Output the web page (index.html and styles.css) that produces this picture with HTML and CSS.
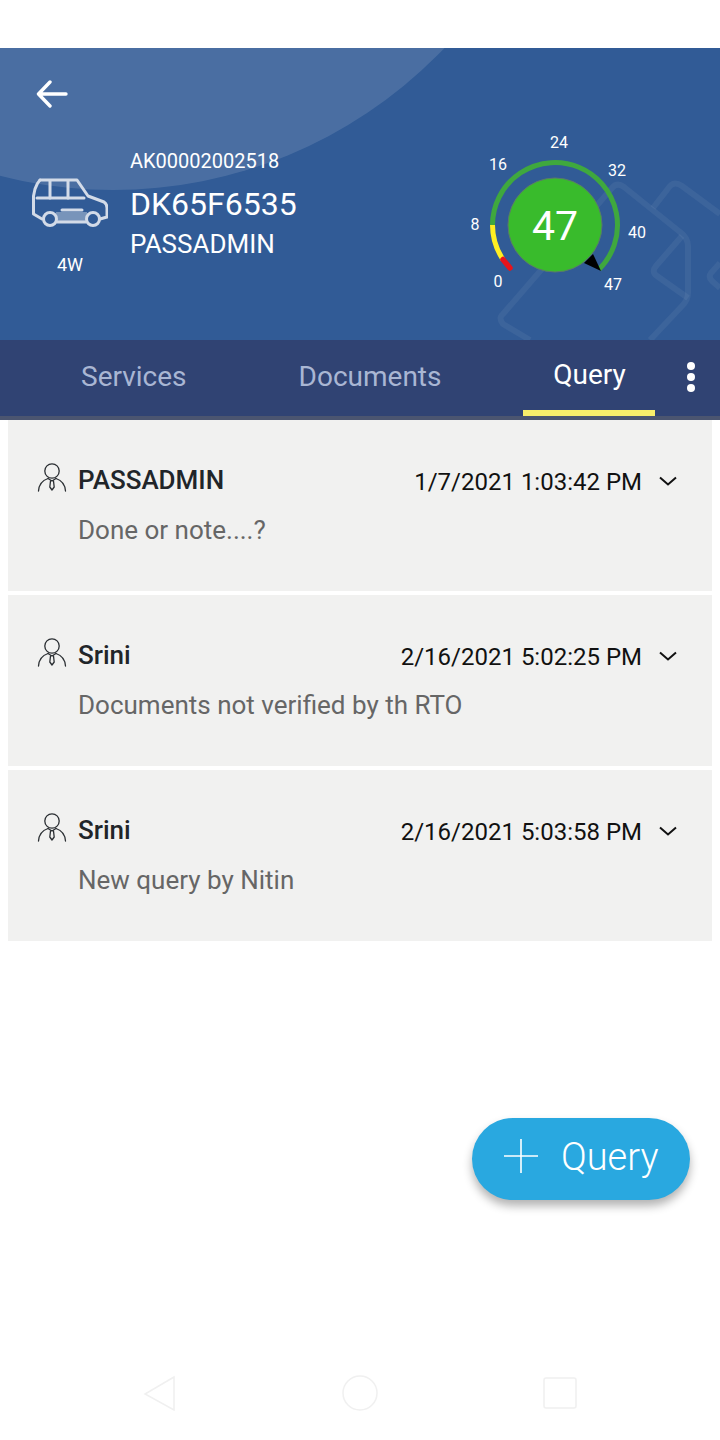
FILE: index.html
```html
<!DOCTYPE html>
<html lang="en">
<head>
    <meta charset="UTF-8">
    <meta name="viewport" content="width=device-width, initial-scale=1.0">
    <title>Query</title>
    <link rel="stylesheet" href="styles.css">
</head>
<body>
    <div class="page">
        <div class="status-bar"></div>

        <header class="header">
            <svg class="header-bg" viewBox="0 0 720 292" aria-hidden="true">
                <circle cx="113" cy="-316" r="458" fill="#fff" fill-opacity="0.12"/>
                <g fill="none" stroke="#fff" stroke-opacity="0.055" stroke-width="6" stroke-linejoin="round">
                    <path d="M530 292 L503 276 Q498 270 503 266 L612 140 Q617 134 624 139 L680 184 Q688 190 688 198 L688 245 Q688 252 682 258 L650 292"/>
                    <path d="M653 160 L670 138 Q675 133 682 138 L720 166"/>
                    <path d="M682 188 L656 218 Q651 224 657 228 L688 250"/>
                    <path d="M720 215 L711 225 Q708 229 712 233 L720 240"/>
                </g>
            </svg>

            <div class="header-left">
                <svg class="back-icon" viewBox="0 0 32 28" aria-hidden="true">
                    <path d="M30 14 H3 M14 2 L2.500 14 L14 26" fill="none" stroke="#fff" stroke-width="3.400" stroke-linecap="round" stroke-linejoin="round"/>
                </svg>
                <div class="vehicle">
                    <div class="vehicle-type">
                        <svg class="car-icon" viewBox="0 0 76 54" aria-hidden="true">
                            <path d="M24 34 H55 V45 H24 Z" fill="#fff" fill-opacity="0.35"/>
                            <g fill="none" stroke="#d3dbe8" stroke-width="3" stroke-linecap="round" stroke-linejoin="round">
                                <path d="M8 2 H45 L56 18 L72 24 Q75 26 75 30 V39 L68 41"/>
                                <path d="M8 2 Q5 5 3 11 L1.500 18 V36 L10 41"/>
                                <path d="M5 20 H52"/>
                                <path d="M18 3 V20 M36 3 V20"/>
                                <path d="M30 32 H50"/>
                                <path d="M25 44 H54"/>
                                <circle cx="18" cy="41" r="6.500"/>
                                <circle cx="61" cy="41" r="6.500"/>
                            </g>
                        </svg>
                        <span class="type-label">4W</span>
                    </div>
                    <div class="vehicle-text">
                        <div class="vehicle-code">AK00002002518</div>
                        <div class="vehicle-number">DK65F6535</div>
                        <div class="vehicle-owner">PASSADMIN</div>
                    </div>
                </div>
            </div>

            <svg class="gauge" viewBox="460 125 190 175" role="img" aria-label="47">
                <g fill="none" stroke-width="5">
                    <path d="M492.500 225 A62.500 62.500 0 1 1 599.200 269.200" stroke="#3fa83e"/>
                    <path d="M492.500 225 A62.500 62.500 0 0 0 503 259.500" stroke="#ffee22"/>
                    <path d="M503 259.500 L510 268" stroke="#e8141c" stroke-width="5.500" stroke-linecap="round"/>
                </g>
                <circle cx="555" cy="225" r="47" fill="#39bb2c" stroke="#5a7a6a" stroke-width="1"/>
                <path d="M601 271 L584 263 L593 254 Z" fill="#000"/>
                <text class="gauge-value" x="555" y="240">47</text>
                <g class="gauge-tick">
                    <text x="559" y="148">24</text>
                    <text x="498" y="170">16</text>
                    <text x="617" y="176">32</text>
                    <text x="475" y="230">8</text>
                    <text x="637" y="238">40</text>
                    <text x="498" y="287">0</text>
                    <text x="613" y="290">47</text>
                </g>
            </svg>
        </header>

        <nav class="tabs">
            <a class="tab">Services</a>
            <a class="tab">Documents</a>
            <a class="tab tab-active">Query</a>
            <div class="more"><span></span><span></span><span></span></div>
        </nav>

        <main class="queries">
            <div class="query-card">
                <div class="query-head">
                    <svg class="user-icon" viewBox="0 0 30 30" aria-hidden="true">
                        <use href="#user"/>
                    </svg>
                    <span class="query-name">PASSADMIN</span>
                    <span class="query-date">1/7/2021 1:03:42 PM</span>
                    <svg class="chevron" viewBox="0 0 18 10" aria-hidden="true"><path d="M1 1.500 L9 8.500 L17 1.500"/></svg>
                </div>
                <p class="query-text">Done or note....?</p>
            </div>
            <div class="query-card">
                <div class="query-head">
                    <svg class="user-icon" viewBox="0 0 30 30" aria-hidden="true">
                        <use href="#user"/>
                    </svg>
                    <span class="query-name">Srini</span>
                    <span class="query-date">2/16/2021 5:02:25 PM</span>
                    <svg class="chevron" viewBox="0 0 18 10" aria-hidden="true"><path d="M1 1.500 L9 8.500 L17 1.500"/></svg>
                </div>
                <p class="query-text">Documents not verified by th RTO</p>
            </div>
            <div class="query-card">
                <div class="query-head">
                    <svg class="user-icon" viewBox="0 0 30 30" aria-hidden="true">
                        <use href="#user"/>
                    </svg>
                    <span class="query-name">Srini</span>
                    <span class="query-date">2/16/2021 5:03:58 PM</span>
                    <svg class="chevron" viewBox="0 0 18 10" aria-hidden="true"><path d="M1 1.500 L9 8.500 L17 1.500"/></svg>
                </div>
                <p class="query-text">New query by Nitin</p>
            </div>
        </main>

        <div class="fab-row">
            <button class="fab">
                <svg class="fab-plus" viewBox="0 0 34 34" aria-hidden="true"><path d="M17 0 V34 M0 17 H34"/></svg>
                <span class="fab-label">Query</span>
            </button>
        </div>

        <div class="nav-bar">
            <svg class="nav-icon" viewBox="0 0 36 36" aria-hidden="true"><path d="M32 2 L3 19 L32 35 Z"/></svg>
            <svg class="nav-icon" viewBox="0 0 36 36" aria-hidden="true"><circle cx="18" cy="18" r="17"/></svg>
            <svg class="nav-icon" viewBox="0 0 36 36" aria-hidden="true"><rect x="2" y="3" width="32" height="30" rx="2"/></svg>
        </div>
    </div>

    <svg class="defs" aria-hidden="true">
        <symbol id="user" viewBox="0 0 30 30">
            <g fill="none" stroke="#2b2f33" stroke-width="1.300" stroke-linecap="round" stroke-linejoin="round">
                <circle cx="15" cy="9" r="7.200"/>
                <path d="M1.500 29 C2 22 5 18.500 11 16.500"/>
                <path d="M28.500 29 C28 22 25 18.500 19 16.500"/>
                <path d="M11 16.500 L15 19 L19 16.500"/>
                <path d="M13.500 19 L12.800 25 L15 28 L17.200 25 L16.500 19"/>
            </g>
        </symbol>
    </svg>
</body>
</html>
```

FILE: styles.css
```css
* {
    box-sizing: border-box;
}
body {
    margin: 0;
    font-family: Roboto, "Liberation Sans", sans-serif;
    background-color: #fff;
}
.page {
    width: 720px;
    height: 1440px;
    display: flex;
    flex-direction: column;
    overflow: hidden;
}
.status-bar {
    height: 48px;
    background-color: #fff;
}
.defs {
    display: none;
}

/* header */
.header {
    position: relative;
    height: 292px;
    flex-shrink: 0;
    display: flex;
    justify-content: space-between;
    background-color: #315b96;
    color: #fff;
    overflow: hidden;
}
.header-bg {
    position: absolute;
    top: 0;
    left: 0;
    width: 720px;
    height: 292px;
}
.header-left {
    position: relative;
    padding: 32px 0 0 32px;
}
.back-icon {
    display: block;
    width: 32px;
    height: 28px;
    margin-left: 4px;
}
.vehicle {
    display: flex;
    gap: 22px;
    margin-top: 39px;
}
.vehicle-type {
    width: 76px;
    padding-top: 31px;
    display: flex;
    flex-direction: column;
    align-items: center;
}
.car-icon {
    display: block;
    width: 76px;
    height: 54px;
    filter: blur(0.5px);
}
.type-label {
    margin-top: 21px;
    font-size: 18px;
    line-height: 24px;
}
.vehicle-text {
    padding-top: 2px;
}
.vehicle-code {
    font-size: 20px;
    line-height: 24px;
}
.vehicle-number {
    margin-top: 12px;
    font-size: 32px;
    line-height: 38px;
}
.vehicle-owner {
    margin-top: 5px;
    font-size: 26px;
    line-height: 32px;
}
.gauge {
    position: relative;
    flex-shrink: 0;
    width: 190px;
    height: 175px;
    margin: 77px 70px 0 0;
}
.gauge text {
    fill: #fff;
    text-anchor: middle;
}
.gauge-value {
    font-size: 41px;
}
.gauge-tick {
    font-size: 16px;
}

/* tabs */
.tabs {
    position: relative;
    height: 80px;
    flex-shrink: 0;
    display: flex;
    gap: 52px;
    padding-left: 51px;
    background-color: #304373;
    border-bottom: 4px solid #4b5570;
}
.tab {
    padding: 0 30px;
    height: 76px;
    font-size: 28px;
    line-height: 74px;
    color: #a9b6d3;
}
.tab-active {
    width: 132px;
    padding: 0;
    text-align: center;
    line-height: 70px;
    color: #fff;
    border-bottom: 6px solid #f8ee6b;
}
.more {
    position: absolute;
    top: 22px;
    left: 687px;
    display: flex;
    flex-direction: column;
    gap: 3px;
}
.more span {
    width: 8px;
    height: 8px;
    border-radius: 50%;
    background-color: #fff;
}

/* query list */
.queries {
    display: flex;
    flex-direction: column;
    gap: 4px;
    padding: 0 8px;
}
.query-card {
    height: 171px;
    padding: 42px 35px 0 29px;
    background-color: #f1f1f0;
}
.query-head {
    display: flex;
    align-items: center;
    height: 36px;
}
.user-icon {
    width: 30px;
    height: 30px;
    flex-shrink: 0;
    margin: 0 11px 6px 0;
}
.query-name {
    font-size: 26px;
    font-weight: 500;
    color: #212529;
}
.query-date {
    margin-left: auto;
    padding-top: 3px;
    font-size: 24px;
    color: #111;
}
.chevron {
    width: 18px;
    height: 10px;
    margin: 2px 0 0 17px;
    fill: none;
    stroke: #111;
    stroke-width: 2;
}
.query-text {
    margin: 16px 0 0 41px;
    font-size: 26px;
    line-height: 32px;
    color: #666;
}

/* floating button */
.fab-row {
    display: flex;
    justify-content: flex-end;
    padding: 177px 30px 0 0;
}
.fab {
    display: flex;
    align-items: center;
    width: 218px;
    height: 82px;
    padding: 0 0 0 32px;
    border: none;
    border-radius: 41px;
    background-color: #29a8e0;
    box-shadow: 0 6px 10px rgba(0, 0, 0, 0.3);
    color: #fff;
    font-family: inherit;
    font-size: 38px;
    font-weight: 300;
}
.fab-plus {
    width: 34px;
    height: 34px;
    margin: 0 23px 6px 0;
    fill: none;
    stroke: #fff;
    stroke-width: 1.600;
}
.fab-label {
    margin-bottom: 4px;
}

/* system navigation */
.nav-bar {
    margin-top: auto;
    height: 92px;
    display: flex;
    justify-content: space-between;
    padding: 0 142px 29px;
    align-items: flex-end;
}
.nav-icon {
    width: 36px;
    height: 36px;
    fill: none;
    stroke: #f0f0f0;
    stroke-width: 1.500;
}
```
